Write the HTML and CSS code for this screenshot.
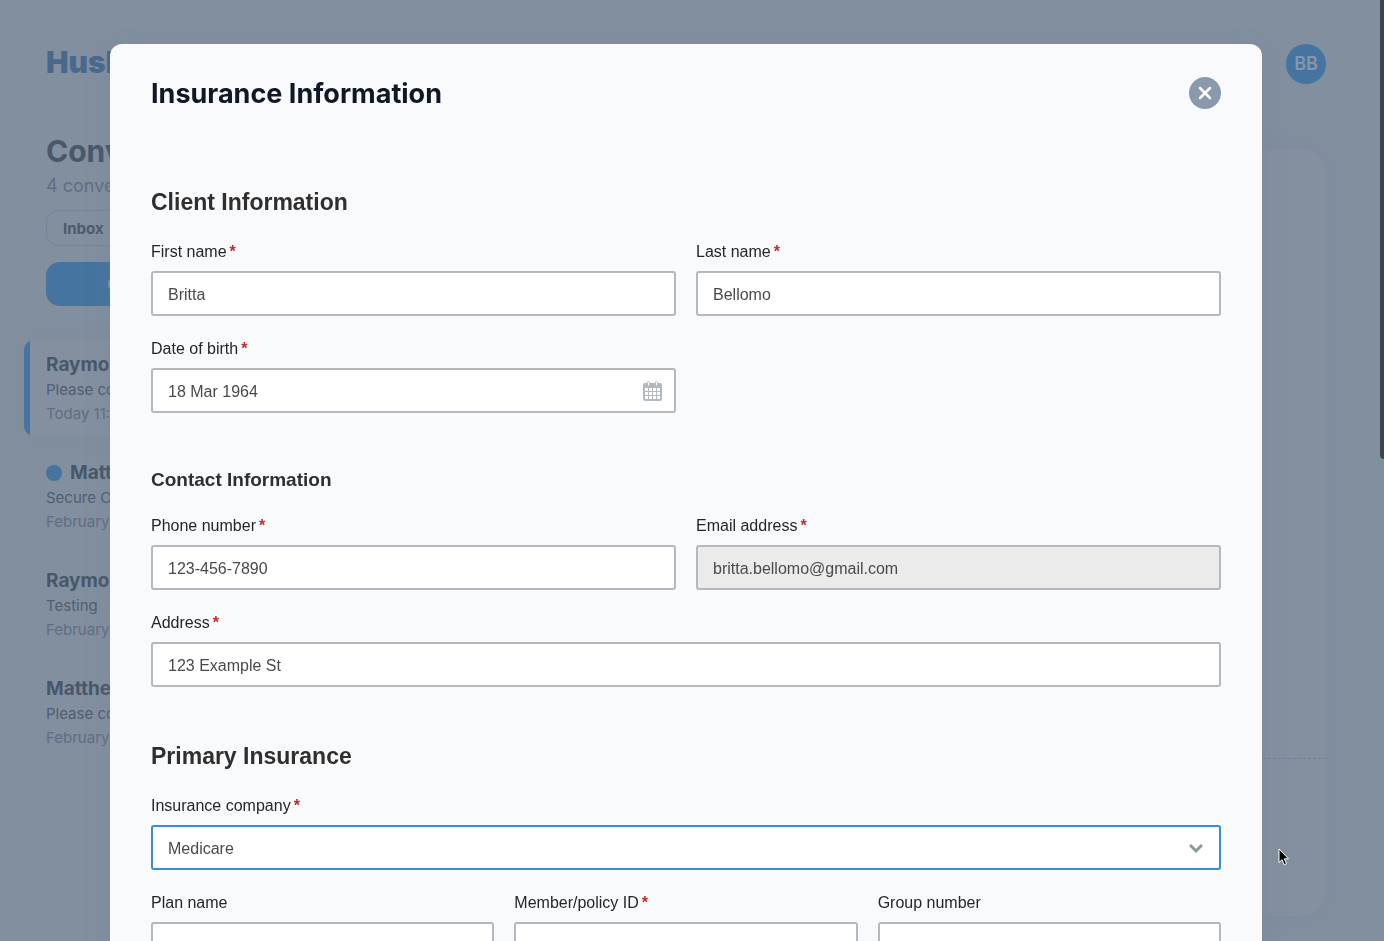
FILE: index.html
```html
<!DOCTYPE html>
<html lang="en">
<head>
  <meta charset="UTF-8">
  <meta name="viewport" content="width=device-width, initial-scale=1.0">
  <title>Insurance Information</title>
  <link rel="stylesheet" href="styles.css">
</head>
<body>
  <div class="page">
    <header class="topbar">
      <div class="logo">Hush</div>
      <div class="avatar">BB</div>
    </header>
    <div class="columns">
      <aside class="sidebar">
        <h1>Conversations</h1>
        <p class="count">4 conversations</p>
        <button class="filter" type="button">Inbox</button>
        <button class="compose" type="button">
          <svg width="20" height="20" viewBox="0 0 20 20" fill="none" stroke="currentColor" stroke-width="2"><circle cx="10" cy="10" r="8"/><path d="M10 6v8M6 10h8"/></svg>
        </button>
        <ul class="threads">
          <li class="thread active">
            <h2>Raymond</h2>
            <p>Please complete</p>
            <time>Today 11:15</time>
          </li>
          <li class="thread">
            <h2><span class="dot"></span>Matthew</h2>
            <p>Secure Chat</p>
            <time>February</time>
          </li>
          <li class="thread">
            <h2>Raymond</h2>
            <p>Testing</p>
            <time>February</time>
          </li>
          <li class="thread">
            <h2>Matthew</h2>
            <p>Please complete</p>
            <time>February</time>
          </li>
        </ul>
      </aside>
      <main class="panel">
        <div class="panel-footer"></div>
      </main>
    </div>
  </div>

  <div class="overlay">
    <div class="modal" role="dialog" aria-labelledby="modalTitle">
      <div class="modal-header">
        <h1 id="modalTitle">Insurance Information</h1>
        <button class="close" type="button" aria-label="Close">
          <svg width="14" height="14" viewBox="0 0 14 14" fill="none" stroke="currentColor" stroke-width="2.5" stroke-linecap="round"><path d="M2 2l10 10M12 2L2 12"/></svg>
        </button>
      </div>

      <form>
        <section class="section">
          <h2>Client Information</h2>
          <div class="grid two">
            <div class="field">
              <label for="firstName">First name<span class="req">*</span></label>
              <input type="text" id="firstName" value="Britta">
            </div>
            <div class="field">
              <label for="lastName">Last name<span class="req">*</span></label>
              <input type="text" id="lastName" value="Bellomo">
            </div>
            <div class="field">
              <label for="dob">Date of birth<span class="req">*</span></label>
              <div class="control">
                <input type="text" id="dob" value="18 Mar 1964">
                <svg class="calendar" width="19" height="20" viewBox="0 0 19 20">
                  <rect x="0" y="2" width="19" height="18" rx="2" fill="#b3b9be"/>
                  <path fill="#fff" d="M2 7h3v3H2zM6 7h3v3H6zM10 7h3v3h-3zM14 7h3v3h-3zM2 11h3v3H2zM6 11h3v3H6zM10 11h3v3h-3zM14 11h3v3h-3zM2 15h3v3H2zM6 15h3v3H6zM10 15h3v3h-3zM14 15h3v3h-3z"/>
                  <rect x="4.500" y="0.500" width="2" height="4.500" rx="1" fill="#fff" stroke="#b3b9be"/>
                  <rect x="12.500" y="0.500" width="2" height="4.500" rx="1" fill="#fff" stroke="#b3b9be"/>
                </svg>
              </div>
            </div>
          </div>
        </section>

        <section class="section">
          <h3>Contact Information</h3>
          <div class="grid two">
            <div class="field">
              <label for="phone">Phone number<span class="req">*</span></label>
              <input type="tel" id="phone" value="123-456-7890">
            </div>
            <div class="field">
              <label for="email">Email address<span class="req">*</span></label>
              <input type="email" id="email" value="britta.bellomo@gmail.com" disabled>
            </div>
            <div class="field full">
              <label for="address">Address<span class="req">*</span></label>
              <input type="text" id="address" value="123 Example St">
            </div>
          </div>
        </section>

        <section class="section">
          <h2>Primary Insurance</h2>
          <div class="grid three">
            <div class="field full">
              <label for="company">Insurance company<span class="req">*</span></label>
              <div class="control">
                <select id="company" class="selected">
                  <option>Medicare</option>
                </select>
                <svg class="chevron" width="14" height="10" viewBox="0 0 14 10" fill="none" stroke="#8a9a9c" stroke-width="3"><path d="M1 1l6 6 6-6"/></svg>
              </div>
            </div>
            <div class="field">
              <label for="plan">Plan name</label>
              <input type="text" id="plan">
            </div>
            <div class="field">
              <label for="member">Member/policy ID<span class="req">*</span></label>
              <input type="text" id="member">
            </div>
            <div class="field">
              <label for="group">Group number</label>
              <input type="text" id="group">
            </div>
          </div>
        </section>
      </form>
    </div>
  </div>

  <div class="scroll-thumb"></div>
  <svg class="cursor" width="12" height="19" viewBox="0 0 12 19"><path d="M1 1v13.500l3-2.800 2.200 5 2.300-1-2.200-4.900h4.200z" fill="#000" stroke="#fff" stroke-width="1"/></svg>
</body>
</html>
```
FILE: styles.css
```css
* {
  box-sizing: border-box;
}
body {
  margin: 0;
  height: 100vh;
  overflow: hidden;
  background: #828f9f;
  color: #485769;
  font-family: Inter, sans-serif;
}
h1, h2, h3, p, ul {
  margin: 0;
  padding: 0;
}
button, input, select {
  font-family: inherit;
}

/* inbox behind the dialog */
.page {
  padding: 44px 58px 0 46px;
}
.topbar {
  display: flex;
  justify-content: space-between;
  height: 40px;
  margin-bottom: 47px;
}
.logo {
  font-size: 30px;
  font-weight: 900;
  line-height: 36px;
  color: #48698c;
}
.avatar {
  width: 40px;
  height: 40px;
  border-radius: 50%;
  background: #44749f;
  color: #8796a8;
  font-size: 18px;
  font-weight: 600;
  line-height: 40px;
  text-align: center;
}
.columns {
  display: grid;
  grid-template-columns: 300px 1fr;
  gap: 24px;
}
.sidebar h1 {
  font-size: 30px;
  font-weight: 700;
  line-height: 40px;
}
.count {
  margin: 2px 0 11px;
  font-size: 18px;
  line-height: 26px;
  color: #5f6e82;
}
.filter {
  display: block;
  height: 36px;
  margin-bottom: 16px;
  padding: 0 16px;
  width: 100%;
  border: 1px solid #75849a;
  border-radius: 12px;
  background: none;
  color: #4b5a6c;
  font-size: 15px;
  font-weight: 700;
  text-align: left;
}
.compose {
  display: flex;
  align-items: center;
  width: 100%;
  height: 44px;
  padding: 0 61px;
  border: 0;
  border-radius: 14px;
  background: #44749f;
  color: #8796a8;
}
.threads {
  display: grid;
  gap: 12px;
  margin: 34px 0 0 -22px;
  list-style: none;
}
.thread {
  padding: 10px 22px;
  border-radius: 10px;
  line-height: 24px;
}
.thread.active {
  background: linear-gradient(to right, #44749f 6px, #8490a0 6px);
  box-shadow: 0 0 20px rgba(110, 125, 150, 0.12);
}
.thread h2 {
  display: flex;
  align-items: center;
  gap: 8px;
  padding-top: 2px;
  font-size: 19px;
  font-weight: 700;
  line-height: 26px;
}
.thread p {
  font-size: 15px;
  color: #4f5e70;
}
.thread time {
  display: block;
  font-size: 15px;
  color: #5f6e82;
}
.dot {
  width: 16px;
  height: 16px;
  border-radius: 50%;
  background: #44749f;
}
.panel {
  display: flex;
  align-items: flex-end;
  height: 767px;
  margin-top: 18px;
  border-radius: 24px;
  background: #8490a0;
  box-shadow: 0 0 16px rgba(120, 128, 155, 0.25);
}
.panel-footer {
  flex: 1;
  height: 158px;
  border-top: 1px dashed #738194;
}

/* dialog */
.overlay {
  position: fixed;
  inset: 0;
  display: flex;
  justify-content: center;
  align-items: flex-start;
  padding: 44px 122px 0 110px;
  overflow: hidden;
}
.modal {
  width: 100%;
  max-width: 1152px;
  padding: 33px 41px;
  border-radius: 12px;
  background: #f9fafc;
  color: #24262a;
  box-shadow: 0 8px 24px rgba(110, 125, 155, 0.25);
  font-family: "Liberation Sans", Arial, sans-serif;
}
.modal-header {
  display: flex;
  justify-content: space-between;
  align-items: center;
  margin-bottom: 77px;
}
.modal-header h1 {
  padding-top: 2px;
  color: #101828;
  font-family: Inter, sans-serif;
  font-size: 27px;
  font-weight: 700;
  line-height: 30px;
}
.close {
  display: flex;
  align-items: center;
  justify-content: center;
  width: 32px;
  height: 32px;
  padding: 0;
  border: 0;
  border-radius: 50%;
  background: #8a99ad;
  color: #fff;
  cursor: pointer;
}
.section {
  margin-bottom: 53px;
}
.section h2, .section h3 {
  color: #2f2f2f;
  font-weight: bold;
}
.section h2 {
  margin-bottom: 23px;
  font-size: 23px;
  line-height: 32px;
}
.section h3 {
  margin-bottom: 21px;
  font-size: 19px;
  line-height: 28px;
}
.grid {
  display: grid;
  gap: 22px 20px;
}
.two {
  grid-template-columns: repeat(2, 1fr);
}
.three {
  grid-template-columns: repeat(3, 1fr);
}
.full {
  grid-column: 1 / -1;
}
.field label {
  display: block;
  margin-bottom: 8px;
  font-size: 16px;
  line-height: 22px;
}
.req {
  margin-left: 3px;
  color: #c02b2b;
  font-weight: bold;
}
.field input, .field select {
  display: block;
  width: 100%;
  height: 45px;
  padding: 2px 15px 0;
  border: 2px solid #b3b9be;
  border-radius: 3px;
  background: #fff;
  color: #4a4a4a;
  font-size: 16px;
  outline: none;
  appearance: none;
}
.field input:disabled {
  background: #ebebeb;
}
.field select.selected {
  border-color: #3490d0;
}
.control {
  position: relative;
}
.calendar {
  position: absolute;
  top: 13px;
  right: 14px;
  overflow: visible;
}
.chevron {
  position: absolute;
  top: 19px;
  right: 18px;
  pointer-events: none;
}

.scroll-thumb {
  position: fixed;
  top: 0;
  right: 0;
  width: 4px;
  height: 459px;
  border-radius: 0 0 0 4px;
  background: #3d454d;
}
.cursor {
  position: fixed;
  top: 848px;
  left: 1278px;
}
```
